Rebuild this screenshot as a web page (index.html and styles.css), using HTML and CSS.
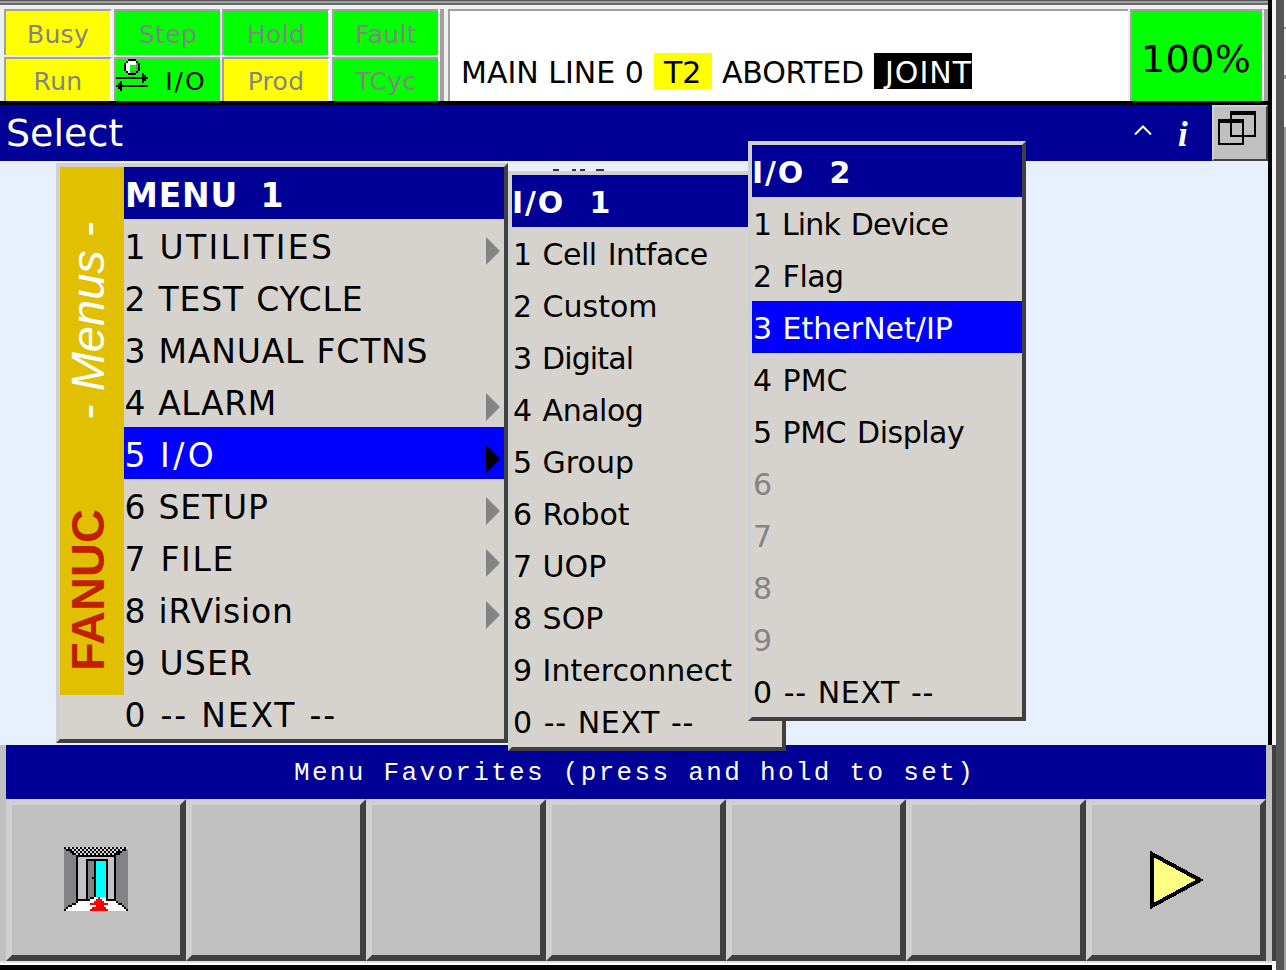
FILE: index.html
```html
<!DOCTYPE html>
<html lang="en">
<head>
<meta charset="utf-8">
<title>Teach Pendant</title>
<link rel="stylesheet" href="styles.css">
</head>
<body>
<div class="frame">
  <div class="screen">
    <header class="status">
      <div class="lamps">
        <div class="lamp yellow wide">Busy</div>
        <div class="lamp green">Step</div>
        <div class="lamp green wide">Hold</div>
        <div class="lamp green">Fault</div>
        <div class="lamp yellow wide">Run</div>
        <div class="lamp green active">
          <svg class="io-icon" width="32" height="26" viewBox="0 0 16 13" shape-rendering="crispEdges">
            <path fill="#fff" d="M5 1h6v6h-6z"/>
            <path fill="#00ff00" d="M7 3h3v3h-3z"/>
            <path fill="#848284" d="M10 2h1v5h-4v-1h3z"/>
            <path d="M6 0h4v1h-4zM5 1h1v1h-1zM10 1h1v1h-1zM4 2h1v4h-1zM11 2h1v4h-1zM5 6h1v1h-1zM10 6h1v1h-1zM6 7h4v1h-4z"/>
            <path d="M0 9h16v1H0zM13 7h1v1h1v1h1v1h-1v1h-1v1h-1z"/>
          </svg>
          <svg class="io-back" width="32" height="10" viewBox="0 0 16 5" shape-rendering="crispEdges">
            <path d="M0 2h16v1H0zM2 0h1v5h-1v-1h-1v-1h-1v-1h1v-1h1z"/>
          </svg>
          <span>I/O</span>
        </div>
        <div class="lamp yellow wide">Prod</div>
        <div class="lamp green">TCyc</div>
      </div>
      <div class="message">
        <span class="m-main">MAIN LINE 0</span><span class="tag-t2">T2</span><span class="m-aborted">ABORTED</span><span class="tag-joint">JOINT</span>
      </div>
      <div class="override"><span>100%</span></div>
    </header>
    <div class="titlebar">
      <span class="title">Select</span>
      <svg class="caret" width="18" height="10" viewBox="0 0 18 10"><path d="M1 9.500 9 1.500 17 9.500" fill="none" stroke="#fff" stroke-width="2"/></svg>
      <span class="info">i</span>
      <div class="windows">
        <svg width="38" height="34" viewBox="0 0 19 17" shape-rendering="crispEdges"><path d="M0 4h13v2H0zM0 4h1v13H0zM12 4h1v13h-1zM0 16h13v1H0zM6 0h13v2H6zM6 0h1v13H6zM18 0h1v13h-1zM6 12h13v1H6z"/></svg>
      </div>
    </div>
    <main class="work"></main>
    <footer class="favorites">
      <div class="fav-title">Menu Favorites (press and hold to set)</div>
      <div class="fav-keys">
        <div class="key">
          <svg class="door" width="64" height="64" viewBox="0 0 32 32" shape-rendering="crispEdges">
            <defs><pattern id="chk" width="2" height="2" patternUnits="userSpaceOnUse"><rect width="2" height="2" fill="#d8d8d8"/><rect width="1" height="1"/><rect x="1" y="1" width="1" height="1"/></pattern></defs>
            <path fill="#848284" d="M0 1h32v30H0z"/>
            <path fill="url(#chk)" d="M0 0h32v1h-2v1h-2v1h-2v1H6V3H4V2H2V1H0z"/>
            <path d="M1 1h2v1H1zM3 2h2v1H3zM4 3h2v1H4zM29 1h2v1h-2zM27 2h2v1h-2zM26 3h2v1h-2z"/>
            <path fill="#fff" d="M0 32v-1h1v-1h1v-1h2v-1h2v-1h7v-2h8v2h5v1h2v1h2v1h1v1h1v1z"/>
            <path d="M6 4h20v23H6z"/>
            <path fill="#c4c2c6" d="M7 5h18v21H7z"/>
            <path d="M11 6h11v21H11z"/>
            <path fill="#848284" d="M12 7h3v19h-3z"/>
            <path fill="#0ff" d="M16 7h5v18h-5z"/>
            <path d="M14 15h1v1h-1z"/>
            <path fill="#fff" d="M13 26h2v-1h6v2h-8z"/>
            <path d="M13 25h2v1h-2zM5 27h1v1H4v1H2v1H1v1H0v1h1v-1h1v-1h2v-1h2v-1h1v-1zM26 27h1v1h2v1h1v1h1v1h1v1h-1v-1h-1v-1h-1v-1h-2v-1h-1z"/>
            <path fill="red" d="M17 25h1v1h1v1h1v1h2v1h-2v1h1v1h1v1h-9v-1h1v-1h2v-1h-3v-1h2v-1h1v-1h1z"/>
          </svg>
        </div>
        <div class="key"></div><div class="key"></div><div class="key"></div><div class="key"></div><div class="key"></div>
        <div class="key">
          <svg class="play" width="54" height="58" viewBox="0 0 54 58" shape-rendering="crispEdges"><path d="M2 3 50 29 2 55z" fill="#ffff84" stroke="#000" stroke-width="4"/></svg>
        </div>
      </div>
    </footer>
  </div>
  <div class="bezel"></div>

  <svg class="hidden-row" width="54" height="2" viewBox="0 0 54 2"><path d="M1 0h6v2H1zM20 0h4v2h-4zM28 0h5v2h-5zM44 0h8v2h-8z" fill="#333"/></svg>

  <nav class="menu menu-main">
    <div class="brand"><span class="brand-name">FANUC</span><span class="brand-menus">- Menus -</span></div>
    <ul class="list">
      <li class="head">MENU  1</li>
      <li class="sub">1 UTILITIES</li>
      <li>2 TEST CYCLE</li>
      <li>3 MANUAL FCTNS</li>
      <li class="sub">4 ALARM</li>
      <li class="sub selected">5 I/O</li>
      <li class="sub">6 SETUP</li>
      <li class="sub">7 FILE</li>
      <li class="sub">8 iRVision</li>
      <li>9 USER</li>
      <li>0 -- NEXT --</li>
    </ul>
  </nav>
  <nav class="menu menu-io1">
    <ul class="list">
      <li class="head">I/O  1</li>
      <li class="snug">1 Cell Intface</li>
      <li>2 Custom</li>
      <li class="tight">3 Digital</li>
      <li class="snug">4 Analog</li>
      <li>5 Group</li>
      <li>6 Robot</li>
      <li>7 UOP</li>
      <li>8 SOP</li>
      <li>9 Interconnect</li>
      <li class="loose">0 -- NEXT --</li>
    </ul>
  </nav>
  <nav class="menu menu-io2">
    <ul class="list">
      <li class="head">I/O  2</li>
      <li class="tight">1 Link Device</li>
      <li class="snug">2 Flag</li>
      <li class="selected">3 EtherNet/IP</li>
      <li>4 PMC</li>
      <li class="snug">5 PMC Display</li>
      <li class="off">6</li>
      <li class="off">7</li>
      <li class="off">8</li>
      <li class="off">9</li>
      <li class="loose">0 -- NEXT --</li>
    </ul>
  </nav>
</div>
</body>
</html>
```
FILE: styles.css
```css
* { box-sizing: border-box; }
body { margin: 0; width: 1286px; height: 970px; overflow: hidden; font-family: "DejaVu Sans", Verdana, sans-serif; color: #000; }
.frame { position: relative; display: flex; width: 1286px; height: 970px; background: #000; }
.screen { width: 1272px; height: 970px; display: flex; flex-direction: column; }

/* Window edge to the right of the screen */
.bezel { width: 14px; border-left: 4px solid #f4f4f4; background: linear-gradient(to right, #555 8px, transparent 8px), linear-gradient(#fff 27px, #a0a0a0 27px, #a0a0a0 29px, #f4f4f4 29px, #f4f4f4 75px, #a0a0a0 75px, #a0a0a0 79px, #fff 79px, #fff 127px, #a0a0a0 127px); }

/* Status strip */
.status { height: 105px; display: flex; padding: 9px 0 0 4px; border-right: 4px solid #000; border-bottom: 4px solid #000; background: linear-gradient(#555 1px, #a0a0a0 1px, #a0a0a0 3px, #696969 3px, #696969 5px, #f0f0f0 5px); }
.lamps { width: 440px; padding-right: 2px; display: grid; grid-template-columns: 108px 106px 108px 106px; grid-template-rows: 46px 44px; gap: 2px; border-right: 4px solid #a0a0a0; }
.lamp { display: flex; align-items: center; justify-content: center; border-top: 2px solid #a0a0a0; border-left: 2px solid #a0a0a0; color: #848484; font-size: 25px; line-height: 44px; padding-top: 3px; letter-spacing: 0.3px; }
.lamp.wide { border-right: 2px solid #fff; }
.yellow { background: #ff0; }
.green { background: #0f0; }
.lamp.active { position: relative; color: #000; padding-left: 36px; letter-spacing: 2px; }
.io-icon { position: absolute; left: 0; top: 0; }
.io-back { position: absolute; left: 0; top: 22px; }
.message { margin-left: 4px; width: 680px; border-top: 2px solid #a0a0a0; border-left: 2px solid #a0a0a0; background: #fff; display: flex; align-items: flex-start; padding: 42px 0 0 11px; font-size: 30px; line-height: 39px; white-space: pre; }
.message span { height: 36px; }
.m-main { width: 193px; }
.tag-t2 { width: 58px; padding-left: 10px; background: #ff0; }
.m-aborted { width: 162px; padding-left: 10px; letter-spacing: -0.2px; }
.tag-joint { width: 98px; padding-left: 11px; background: #000; color: #fff; letter-spacing: 1px; }
.override { margin-left: 2px; width: 134px; border: solid #a0a0a0; border-width: 2px 0 0 2px; border-right: 2px solid #fff; background: #0f0; font-size: 38px; line-height: 96px; padding-left: 9px; letter-spacing: 0.4px; }
.status::after { content: ""; flex: 1; background: #a0a0a0; }

/* Title bar */
.titlebar { height: 56px; display: flex; background: #000096; color: #fff; border-right: 4px solid #000; }
.title { width: 1134px; padding-left: 6px; font-size: 38px; line-height: 57px; }
.caret { margin-top: 20px; }
.info { width: 60px; padding-left: 26px; font: italic bold 35px/59px "Liberation Serif", serif; }
.windows { width: 56px; padding: 4px; border: 2px solid; border-color: #d0d0d0 #404040 #404040 #d0d0d0; background: #c0c0c0; }
.work { height: 584px; background: #e8f0fe; border-right: 4px solid #000; }

/* Favorites */
.favorites { height: 225px; background: linear-gradient(#404040 216px, #fff 216px) right / 4px 100% no-repeat, linear-gradient(#c0c0c0 216px, #e0e0e0 216px, #e0e0e0 218px, #fff 218px, #fff 220px, #000 220px); margin-right: -4px; z-index: 1; padding: 0 10px 0 6px; }
.fav-title { width: 1260px; height: 54px; padding-left: 288px; background: #000096; color: #fff; white-space: pre; font: 26px/56px "Liberation Mono", monospace; letter-spacing: 2.32px; }
.fav-keys { display: flex; }
.key { width: 180px; height: 162px; border: 6px solid; border-color: #d0d0d0 #404040 #404040 #d0d0d0; background: #c0c0c0; }
.door { display: block; margin: 42px 0 0 52px; }
.play { display: block; margin: 46px 0 0 58px; }

/* Pop-up menus, stacked over the work area */
.menu { position: absolute; z-index: 2; display: flex; height: 580px; border: 4px solid; border-color: #d0d0d0 #404040 #404040 #d0d0d0; background: #d6d3ce; }
.menu-main { left: 56px; top: 163px; width: 452px; font-size: 33px; letter-spacing: 0.8px; word-spacing: 1px; }
.menu-io1 { left: 508px; top: 171px; width: 278px; }
.menu-io2 { left: 748px; top: 141px; width: 278px; }
.menu-io1, .menu-io2 { font-size: 30px; word-spacing: 1px; }
.list { flex: 1; margin: 0; padding: 0; list-style: none; }
.list li { height: 52px; line-height: 58px; white-space: pre; padding-left: 0.5px; }
.menu-io1 li, .menu-io2 li { line-height: 56px; padding-left: 1px; }
.list .head { background: #000096; color: #fff; font-weight: bold; padding-left: 1px; word-spacing: -1px; }
.menu-io1 .head, .menu-io2 .head { letter-spacing: 1.8px; word-spacing: 0; padding-left: 0; }
.list .selected { background: #00f; color: #fff; }
.list .off { color: #848484; }
.list .sub { display: flex; justify-content: space-between; padding-right: 4px; }
.sub::after { content: ""; width: 14px; height: 28px; margin-top: 18px; background: #848484; clip-path: polygon(0 0, 100% 50%, 0 100%); }
.sub.selected::after { background: #000; }

.menu-main li:nth-child(2) { letter-spacing: 2.3px; word-spacing: -1px; }
.menu-main li:nth-child(5) { letter-spacing: 0.6px; }
.menu-main li:nth-child(6) { letter-spacing: 3.5px; word-spacing: -3px; }
.menu-main li:nth-child(8) { letter-spacing: 1.7px; }
.menu-main li:nth-child(10) { letter-spacing: 1.2px; }
.menu-main li:nth-child(11) { letter-spacing: 1.8px; }
.list .tight { letter-spacing: -0.85px; word-spacing: 2px; }
.list .snug { letter-spacing: -0.5px; word-spacing: 2px; }
.list .loose { letter-spacing: 0.6px; }

.brand { width: 64px; height: 528px; background: #e0c000; writing-mode: vertical-rl; transform: rotate(180deg); font-family: "Liberation Sans", Arial, sans-serif; font-size: 47px; line-height: 56px; letter-spacing: 0; word-spacing: 0; white-space: pre; display: flex; padding-left: 8px; }
.brand-name { padding-top: 24px; height: 275px; color: #c02000; font-weight: bold; }
.brand-menus { color: #fff; font-style: italic; }
.hidden-row { position: absolute; left: 552px; top: 169px; }
```
